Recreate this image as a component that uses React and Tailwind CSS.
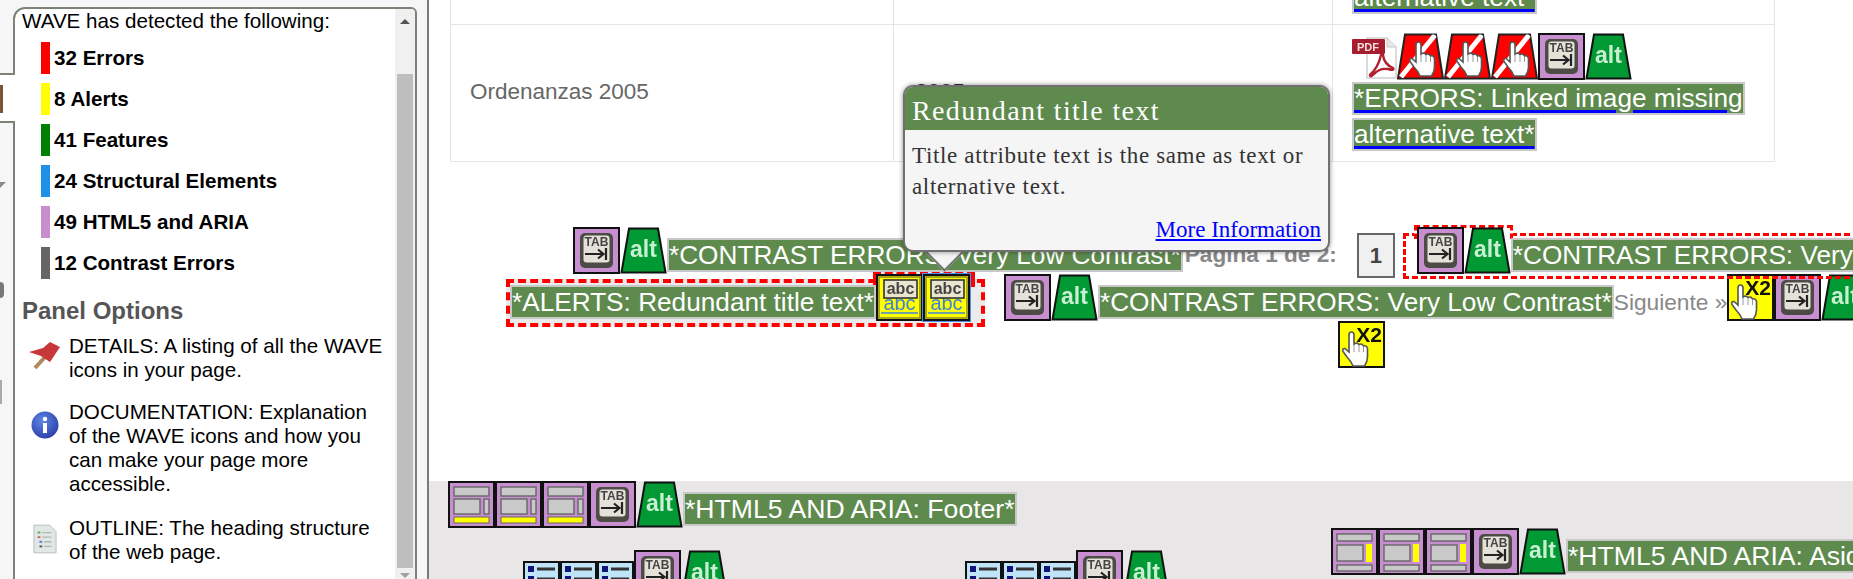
const SUMMARY = [
  { label: "32 Errors", color: "bg-[#ff0000]" },
  { label: "8 Alerts", color: "bg-[#ffff00]" },
  { label: "41 Features", color: "bg-[#008000]" },
  { label: "24 Structural Elements", color: "bg-[#1e90e8]" },
  { label: "49 HTML5 and ARIA", color: "bg-[#c68fcc]" },
  { label: "12 Contrast Errors", color: "bg-[#666666]" },
];

function Hand({ x = 0, y = 0, s = 1 }) {
  return (
    <g transform={`translate(${x} ${y}) scale(${s})`}>
      <path
        d="M16 11Q16 8 18.5 8T21 11V20Q24 18 26 20.5Q29 19 30.5 22Q33.5 21 34.5 24.5V33Q34.5 38 31.5 42H20Q18 37 14 33L10 27.5Q9 24 12 24.5L16 28Z"
        fill="#ffffff"
        stroke="#555555"
        strokeWidth="1.6"
      />
      <path d="M21 21V28M26 21V28M30.5 23V28" stroke="#999999" strokeWidth="1" fill="none" />
    </g>
  );
}

function TabIcon() {
  return (
    <svg viewBox="0 0 47 47" className="w-[47px] h-[47px] shrink-0 blur-[0.5px]">
      <rect x="1" y="1" width="45" height="45" fill="#c78fcf" stroke="#111111" strokeWidth="2" />
      <rect x="7" y="6" width="33" height="35" rx="5" fill="#4d4b46" />
      <rect x="10.5" y="8.5" width="26" height="27" rx="3" fill="#e4e2d8" />
      <text x="23.5" y="19" textAnchor="middle" fontSize="12" fontWeight="700" fill="#444444" fontFamily="Liberation Sans">TAB</text>
      <path d="M12 27H30M25 22.5L30.5 27L25 31.5M33 21V33" stroke="#222222" strokeWidth="2.2" fill="none" />
    </svg>
  );
}

function AltIcon() {
  return (
    <svg viewBox="0 0 47 47" className="w-[47px] h-[47px] shrink-0 blur-[0.4px]">
      <path d="M9 1.5H38L45.5 45.5H1.5Z" fill="#009933" stroke="#111111" strokeWidth="2" />
      <text x="23.5" y="30" textAnchor="middle" fontSize="23" fontWeight="700" fill="#c9efd2" fontFamily="Liberation Sans">alt</text>
    </svg>
  );
}

function BrokenLinkIcon() {
  return (
    <svg viewBox="0 0 47 47" className="w-[47px] h-[47px] shrink-0 blur-[0.4px]">
      <clipPath id="trap">
        <path d="M8 1.5H39L46 45.5H1Z" />
      </clipPath>
      <path d="M8 1.5H39L46 45.5H1Z" fill="#ff0000" stroke="#222222" strokeWidth="2" />
      <path d="M4 44L38 2" stroke="#ffffff" strokeWidth="5" clipPath="url(#trap)" />
      <Hand x="3" y="1" />
    </svg>
  );
}

function AbcIcon({ active }) {
  return (
    <svg
      viewBox="0 0 47 47"
      className={active ? "w-[47px] h-[47px] shrink-0 blur-[0.3px] outline outline-1 outline-[#4a90f0]" : "w-[47px] h-[47px] shrink-0 blur-[0.3px]"}
    >
      <rect x="1" y="1" width="45" height="45" fill="#ffff00" stroke="#111111" strokeWidth="2" />
      <rect x="3" y="3" width="41" height="41" fill="none" stroke="#8a8a20" strokeWidth="1.5" />
      <text x="23.5" y="36" textAnchor="middle" fontSize="20" fill="#3f85d6" fontFamily="Liberation Sans">abc</text>
      <path d="M5 39H42" stroke="#3f85d6" strokeWidth="1.5" />
      <rect x="8" y="6" width="33" height="18" fill="#e9e5cf" stroke="#333333" strokeWidth="1.6" />
      <text x="24.5" y="20" textAnchor="middle" fontSize="16" fontWeight="700" fill="#444444" fontFamily="Liberation Sans">abc</text>
    </svg>
  );
}

function RepeatIcon() {
  return (
    <svg viewBox="0 0 47 47" className="w-[47px] h-[47px] shrink-0 blur-[0.3px]">
      <rect x="1" y="1" width="45" height="45" fill="#ffff00" stroke="#111111" strokeWidth="2" />
      <text x="31" y="21" textAnchor="middle" fontSize="21" fontWeight="700" fill="#111111" fontFamily="Liberation Sans">X2</text>
      <Hand x="-5" y="3" />
    </svg>
  );
}

function LayoutIcon({ kind }) {
  return (
    <svg viewBox="0 0 47 47" className="w-[47px] h-[47px] shrink-0 blur-[0.3px]">
      <rect x="1" y="1" width="45" height="45" fill="#c78fcf" stroke="#111111" strokeWidth="2" />
      {kind === "footer" ? (
        <>
          <rect x="6" y="6" width="35" height="9" fill="#c9c9c9" stroke="#666666" strokeWidth="1.4" />
          <rect x="6" y="18" width="26" height="15" fill="#c9c9c9" stroke="#666666" strokeWidth="1.4" />
          <rect x="36" y="18" width="5" height="15" fill="#c9c9c9" stroke="#666666" strokeWidth="1.4" />
          <rect x="6" y="36" width="35" height="6" fill="#ffff00" stroke="#666666" strokeWidth="1" />
        </>
      ) : (
        <>
          <rect x="6" y="6" width="35" height="7" fill="#c9c9c9" stroke="#666666" strokeWidth="1.4" />
          <rect x="6" y="17" width="26" height="16" fill="#c9c9c9" stroke="#666666" strokeWidth="1.4" />
          <rect x="35" y="16" width="6" height="18" fill="#ffff00" />
          <rect x="6" y="37" width="35" height="6" fill="#c9c9c9" stroke="#666666" strokeWidth="1.4" />
        </>
      )}
    </svg>
  );
}

function ListIcon() {
  return (
    <svg viewBox="0 0 37 37" className="w-[37px] h-[37px] shrink-0 blur-[0.3px]">
      <rect x="1" y="1" width="35" height="35" fill="#bfe3f7" stroke="#111111" strokeWidth="2" />
      <rect x="5" y="5" width="6" height="6" fill="#13137a" />
      <rect x="5" y="15" width="6" height="6" fill="#13137a" />
      <rect x="5" y="25" width="6" height="6" fill="#13137a" />
      <path d="M14 8H32M14 18H32M14 28H32" stroke="#333333" strokeWidth="3" />
    </svg>
  );
}

function PdfIcon() {
  return (
    <svg viewBox="0 0 45 42" className="w-[45px] h-[42px] shrink-0 blur-[0.3px]">
      <path d="M15 1H35L44 10V41H15Z" fill="#ffffff" stroke="#d0d0d0" strokeWidth="1.5" />
      <path d="M35 1V10H44" fill="#e8e8e8" stroke="#c8c8c8" />
      <path d="M18 38Q26 31 29 18Q30 13 31 18Q32 27 41 31Q43 34 36 32Q27 31 22 37Q18 41 18 38Z" fill="none" stroke="#b3202f" strokeWidth="2.4" />
      <rect x="0" y="2" width="33" height="15" rx="1" fill="#a81c30" />
      <text x="16" y="14" textAnchor="middle" fontSize="11" fontWeight="700" fill="#f3dede" fontFamily="Liberation Sans">PDF</text>
    </svg>
  );
}

function Banner({ text, size = "text-[26.2px]" }) {
  return (
    <span className={`shrink-0 whitespace-nowrap border-2 border-[#c8c8c8] bg-[#5e8a4e] h-[34px] leading-[30px] text-white mt-[11px] ${size}`}>
      {text}
    </span>
  );
}

function LinkedBanner({ text }) {
  return (
    <span className="inline-block whitespace-nowrap border-2 border-[#c8c8c8] bg-[#5e8a4e] h-[33px] leading-[28px] text-[26.2px] text-white underline decoration-[#0000ff] decoration-[3px] underline-offset-[3px]">
      {text}
    </span>
  );
}

function Sidebar() {
  return (
    <aside className="relative w-[429px] h-[579px] shrink-0 border-r-2 border-[#77797a] bg-[#f6f6f6] pl-[13px] pr-[10px] pt-[7px]">
      {/* tab strip poking out of the panel on the left */}
      <div className="absolute left-0 top-[73px] w-[15px] h-[50px] border-y-2 border-[#7b8276] bg-white z-10">
        <div className="w-[3px] h-[28px] mt-[10px] bg-[#7a5638]" />
      </div>
      <div className="absolute left-0 top-[182px] w-0 h-0 border-t-[6px] border-t-[#8a8a8a] border-r-[6px] border-r-transparent" />
      <div className="absolute left-0 top-[282px] w-[4px] h-[16px] rounded-r-full bg-[#777777]" />
      <div className="absolute left-0 top-[380px] w-[2px] h-[24px] bg-[#aaaaaa]" />

      <div className="flex h-[600px] rounded-tl-[12px] rounded-tr-[6px] border-2 border-[#7b8276] bg-white overflow-hidden">
        <div className="flex-1 pl-[7px] text-black text-[20.6px] leading-[24px]">
          <p>WAVE has detected the following:</p>
          <ul className="mt-[9px] ml-[19px]">
            {SUMMARY.map((item) => (
              <li key={item.label} className="flex items-center h-[32px] mb-[9px]">
                <span className={`w-[9px] h-[32px] ${item.color}`} />
                <span className="ml-[4px] font-bold">{item.label}</span>
              </li>
            ))}
          </ul>
          <h2 className="text-[24px] leading-[26px] font-bold text-[#555555] mt-[19px]">Panel Options</h2>
          <div className="flex mt-[10px]">
            <svg viewBox="0 0 32 30" className="w-[32px] h-[30px] ml-[7px] mt-[8px] shrink-0 blur-[0.3px]">
              <path d="M6 26L17 14" stroke="#b08a5a" strokeWidth="4" />
              <path d="M0 10L14 6L21 0L31 5L21 20L12 14Z" fill="#c8373a" />
            </svg>
            <p className="ml-[8px] pr-[6px]">DETAILS: A listing of all the WAVE icons in your page.</p>
          </div>
          <div className="flex mt-[18px]">
            <svg viewBox="0 0 28 28" className="w-[28px] h-[28px] ml-[9px] mt-[11px] shrink-0 blur-[0.3px]">
              <defs>
                <radialGradient id="infoGlow" cx="40%" cy="35%" r="70%">
                  <stop offset="0%" stopColor="#5f86e6" />
                  <stop offset="100%" stopColor="#2a3fa8" />
                </radialGradient>
              </defs>
              <circle cx="14" cy="14" r="13.5" fill="url(#infoGlow)" />
              <circle cx="14" cy="8" r="2.2" fill="#ffffff" />
              <rect x="12" y="12" width="4" height="10" fill="#ffffff" />
            </svg>
            <p className="ml-[10px] pr-[6px]">DOCUMENTATION: Explanation of the WAVE icons and how you can make your page more accessible.</p>
          </div>
          <div className="flex mt-[20px]">
            <svg viewBox="0 0 26 32" className="w-[24px] h-[32px] ml-[11px] mt-[7px] shrink-0 blur-[0.3px]">
              <path d="M1 1H18L25 8V31H1Z" fill="#dfe8e4" stroke="#b5bdb9" />
              <rect x="5" y="8" width="3" height="2" fill="#55aa55" />
              <rect x="5" y="13" width="3" height="2" fill="#d06060" />
              <rect x="7" y="18" width="3" height="2" fill="#5577dd" />
              <rect x="7" y="23" width="3" height="2" fill="#555555" />
              <path d="M10 9H20M10 14H20M12 19H20M12 24H20" stroke="#b0b8b4" strokeWidth="1.4" />
            </svg>
            <p className="ml-[12px] pr-[6px]">OUTLINE: The heading structure of the web page.</p>
          </div>
        </div>
        <div className="w-[20px] shrink-0 bg-[#f0f0f0] flex flex-col">
          <div className="h-[65px] flex justify-center pt-[10px]">
            <span className="w-0 h-0 border-x-[5px] border-x-transparent border-b-[5px] border-b-[#555555]" />
          </div>
          <div className="h-[494px] mx-[2px] bg-[#bebebe]" />
          <div className="flex justify-center pt-[5px]">
            <span className="w-0 h-0 border-x-[5px] border-x-transparent border-t-[5px] border-t-[#a0a0a0]" />
          </div>
        </div>
      </div>
    </aside>
  );
}

function Tooltip() {
  return (
    <div className="absolute left-[903px] top-[85px] w-[427px] h-[167px] z-30 font-['Liberation_Serif',serif]">
      <div className="absolute left-[28px] bottom-[-14px] w-[27px] h-[27px] rotate-45 bg-[#f5f5f5] border-r-2 border-b-2 border-[#707070]" />
      <div className="relative h-full rounded-[10px] border-2 border-[#707070] bg-[#f5f5f5] shadow-[0_0_5px_rgba(0,0,0,0.45)] overflow-hidden">
        <h3 className="h-[43px] overflow-hidden bg-[#5e8a4e] pl-[7px] text-[28px] tracking-[1.35px] leading-[47px] text-white">Redundant title text</h3>
        <p className="px-[7px] mt-[10px] text-[23px] tracking-[0.65px] leading-[31px] text-[#333333]">
          Title attribute text is the same as text or alternative text.
        </p>
        <p className="pr-[7px] mt-[15px] text-right text-[23px] leading-[26px]">
          <a href="#" className="text-[#0000ff] underline">More Information</a>
        </p>
      </div>
    </div>
  );
}

function Main() {
  return (
    <main className="w-[1424px] h-[579px] shrink-0 overflow-hidden bg-white">
      <div className="ml-[21px] w-[1325px] grid grid-cols-[442px_440px_442px] border-x border-b border-[#e5e5e5]">
        <div className="h-[25px] border-b border-[#e5e5e5]" />
        <div className="h-[25px] border-x border-b border-[#e5e5e5]" />
        <div className="h-[25px] border-b border-[#e5e5e5] flex items-end pb-[10px] pl-[19px] overflow-hidden">
          <LinkedBanner text="alternative text*" />
        </div>
        <div className="h-[136px] flex items-center pl-[19px] pb-[2px] text-[22.5px] text-[#666666]">Ordenanzas 2005</div>
        <div className="h-[136px] flex items-center border-x border-[#e5e5e5] pl-[21px] pb-[2px] text-[22.5px] text-[#333333]">2005</div>
        <div className="h-[136px] pl-[19px] pt-[8px]">
          <div className="flex items-start">
            <div className="mt-[4px]"><PdfIcon /></div>
            <BrokenLinkIcon />
            <BrokenLinkIcon />
            <BrokenLinkIcon />
            <TabIcon />
            <AltIcon />
          </div>
          <div className="mt-[2px]"><LinkedBanner text="*ERRORS: Linked image missing" /></div>
          <div className="mt-[3px]"><LinkedBanner text="alternative text*" /></div>
        </div>
      </div>

      {/* pagination, first line */}
      <div className="relative z-20 flex items-start w-max h-[47px] mt-[65px] ml-[144px]">
        <TabIcon />
        <AltIcon />
        <Banner text="*CONTRAST ERRORS: Very Low Contrast*" />
        <span className="w-[174px] shrink-0 pl-[2px] mt-[13px] text-[22.6px] leading-[30px] font-bold text-[#888888] whitespace-nowrap">Página 1 de 2:</span>
        <span className="w-[38px] h-[45px] shrink-0 mt-[6px] flex items-center justify-center border-2 border-[#666666] bg-[#f0f0f0] text-[22px] font-bold text-[#444444]">1</span>
        <div className="relative w-[600px] h-[46px] shrink-0 ml-[8px] mt-[6px] border-[3px] border-dashed border-[#ff0000] flex items-start">
          <div className="absolute left-[8px] top-[-11px] w-[99px] h-[14px] border-x-[3px] border-t-[3px] border-dashed border-[#ff0000] bg-white" />
          <div className="relative flex items-start ml-[11px] mt-[-9px]">
            <TabIcon />
            <AltIcon />
            <Banner text="*CONTRAST ERRORS: Very Low Contrast*" />
          </div>
        </div>
      </div>

      {/* pagination, second line */}
      <div className="relative flex items-start w-max h-[47px] ml-[77px]">
        <div className="relative w-[479px] h-[48px] shrink-0 mt-[5px] border-4 border-dashed border-[#ff0000] bg-[#ebebeb] flex items-start z-10">
          <div className="absolute left-[363px] top-[-12px] w-[102px] h-[16px] border-x-4 border-t-4 border-dashed border-[#ff0000] bg-[#ebebeb]" />
          <div className="relative flex items-start mt-[-9px]">
            <Banner text="*ALERTS: Redundant title text*" />
            <AbcIcon />
            <AbcIcon active />
          </div>
        </div>
        <div className="ml-[19px]"><TabIcon /></div>
        <AltIcon />
        <Banner text="*CONTRAST ERRORS: Very Low Contrast*" />
        <span className="mt-[13px] text-[22.7px] leading-[30px] text-[#888888] whitespace-nowrap">Siguiente »</span>
        <RepeatIcon />
        <TabIcon />
        <AltIcon />
      </div>

      {/* pagination, third line */}
      <div className="ml-[909px]"><RepeatIcon /></div>

      <footer className="mt-[113px] h-[98px] bg-[#e8e6e7] overflow-hidden">
        <div className="flex items-start w-max h-[47px] ml-[19px]">
          <LayoutIcon kind="footer" />
          <LayoutIcon kind="footer" />
          <LayoutIcon kind="footer" />
          <TabIcon />
          <AltIcon />
          <Banner text="*HTML5 AND ARIA: Footer*" size="text-[26.6px]" />
        </div>
        <div className="flex items-start w-max">
          <div className="flex items-start ml-[94px] mt-[22px]">
            <div className="flex mt-[11px]"><ListIcon /><ListIcon /><ListIcon /></div>
            <TabIcon />
            <AltIcon />
          </div>
          <div className="flex items-start ml-[237px] mt-[22px]">
            <div className="flex mt-[11px]"><ListIcon /><ListIcon /><ListIcon /></div>
            <TabIcon />
            <AltIcon />
          </div>
          <div className="flex items-start ml-[161px]">
            <LayoutIcon kind="aside" />
            <LayoutIcon kind="aside" />
            <LayoutIcon kind="aside" />
            <TabIcon />
            <AltIcon />
            <Banner text="*HTML5 AND ARIA: Aside*" size="text-[26.6px]" />
          </div>
        </div>
      </footer>
    </main>
  );
}

export default function App() {
  return (
    <div className="relative flex w-[1853px] h-[579px] overflow-hidden bg-white font-['Liberation_Sans',sans-serif]">
      <Sidebar />
      <Main />
      <Tooltip />
    </div>
  );
}
